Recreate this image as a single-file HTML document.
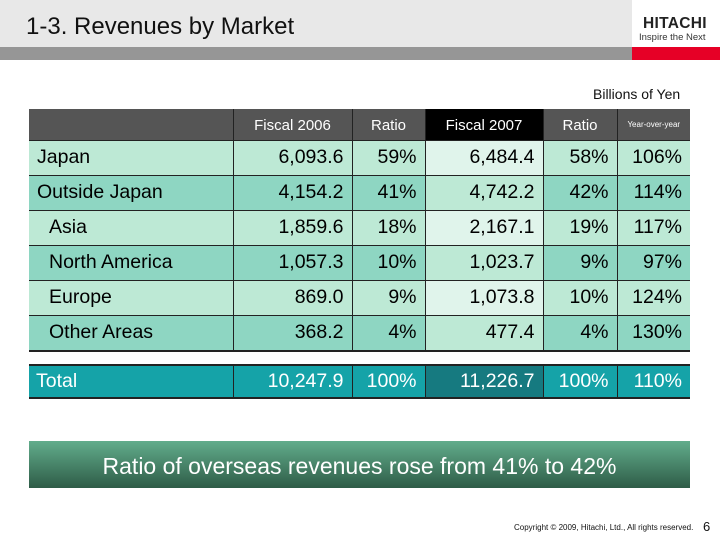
<!DOCTYPE html><html><head><style>
body{margin:0;width:720px;height:540px;background:#fff;position:relative;font-family:"Liberation Sans",sans-serif;overflow:hidden}
.a{position:absolute}
table{position:absolute;left:29px;border-collapse:collapse;table-layout:fixed}
td{padding:0 8px;font-size:19.5px;color:#000;text-align:right;border-left:1px solid #222;white-space:nowrap}
td:first-child{text-align:left;border-left:none}
.l{background:#bde9d5}.m{background:#8ed6c2}.x{background:#e0f4eb}
tr.r td{height:34px;border-top:1px solid #222}
</style></head><body>
<div class="a" style="left:0;top:0;width:632px;height:47px;background:#e8e8e8"></div>
<div class="a" style="left:0;top:47px;width:632px;height:13px;background:#969696"></div>
<div class="a" style="left:632px;top:47px;width:88px;height:13px;background:#e60026"></div>
<div class="a" style="left:26px;top:13px;font-size:24px;color:#111">1-3. Revenues by Market</div>
<div class="a" style="left:643px;top:15px;font-size:15.5px;font-weight:bold;color:#222;letter-spacing:0.3px">HITACHI</div>
<div class="a" style="left:639px;top:32px;font-size:9.5px;color:#333">Inspire the Next</div>
<div class="a" style="left:593px;top:86px;font-size:14px;color:#111">Billions of Yen</div>
<table style="top:109px;width:661px">
<colgroup><col style="width:204px"><col style="width:119px"><col style="width:73px"><col style="width:118px"><col style="width:74px"><col style="width:73px"></colgroup>
<tr style="height:31px;background:#555"><td></td><td style="color:#fff;font-size:15px;text-align:center;padding-top:3px">Fiscal 2006</td><td style="color:#fff;font-size:15px;text-align:center;padding-top:3px">Ratio</td><td style="color:#fff;font-size:15px;text-align:center;background:#000;padding-top:3px">Fiscal 2007</td><td style="color:#fff;font-size:15px;text-align:center;padding-top:3px">Ratio</td><td style="color:#fff;font-size:8px;text-align:center">Year-over-year</td></tr>
<tr class="r l"><td style="padding-left:8px">Japan</td><td>6,093.6</td><td>59%</td><td class="x">6,484.4</td><td>58%</td><td>106%</td></tr>
<tr class="r m"><td style="padding-left:8px">Outside Japan</td><td>4,154.2</td><td>41%</td><td class="l">4,742.2</td><td>42%</td><td>114%</td></tr>
<tr class="r l"><td style="padding-left:20px">Asia</td><td>1,859.6</td><td>18%</td><td class="x">2,167.1</td><td>19%</td><td>117%</td></tr>
<tr class="r m"><td style="padding-left:20px">North America</td><td>1,057.3</td><td>10%</td><td class="l">1,023.7</td><td>9%</td><td>97%</td></tr>
<tr class="r l"><td style="padding-left:20px">Europe</td><td>869.0</td><td>9%</td><td class="x">1,073.8</td><td>10%</td><td>124%</td></tr>
<tr class="r m" style="border-bottom:2px solid #222"><td style="padding-left:20px">Other Areas</td><td>368.2</td><td>4%</td><td class="l">477.4</td><td>4%</td><td>130%</td></tr>
</table>
<table style="top:364px;width:661px;border-top:2px solid #222;border-bottom:2px solid #222">
<colgroup><col style="width:204px"><col style="width:119px"><col style="width:73px"><col style="width:118px"><col style="width:74px"><col style="width:73px"></colgroup>
<tr style="height:33px;background:#15a3a8"><td style="color:#fff;padding-left:7px">Total</td><td style="color:#fff">10,247.9</td><td style="color:#fff">100%</td><td style="color:#fff;background:#167a80">11,226.7</td><td style="color:#fff">100%</td><td style="color:#fff">110%</td></tr>
</table>
<div class="a" style="left:29px;top:441px;width:661px;height:47px;background:linear-gradient(#62ad8c,#2e5c47);color:#fff;font-size:23px;text-align:center;line-height:50px">Ratio of overseas revenues rose from 41% to 42%</div>
<div class="a" style="left:514px;top:523px;font-size:8px;color:#111">Copyright © 2009, Hitachi, Ltd., All rights reserved.</div>
<div class="a" style="left:703px;top:519px;font-size:13px;color:#111">6</div>
</body></html>
